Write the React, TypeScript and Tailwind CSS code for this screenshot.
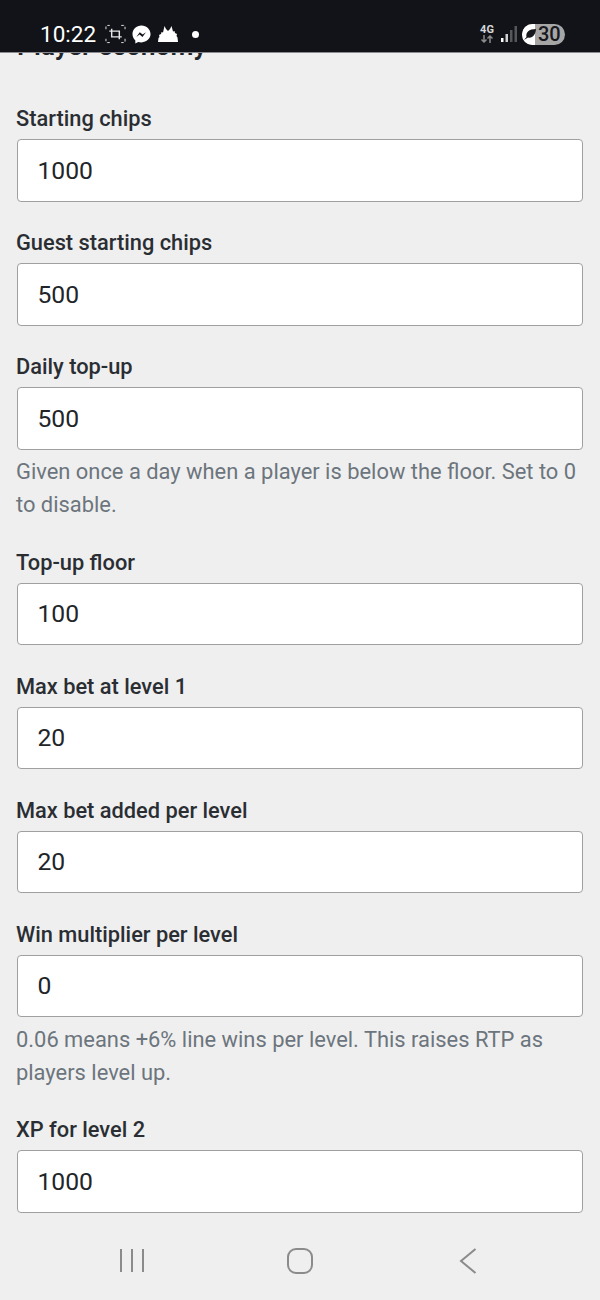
import { ReactNode } from 'react';

const Field = ({ label, value, hint }: { label: string; value: string; hint?: ReactNode }) => (
  <div className="mb-[23.500px]">
    <label className="block h-[38px] pt-[3px] text-[21.8px] leading-[30px] font-[550] text-[#2a2e33]">{label}</label>
    <div className="ml-px mr-px h-[62.500px] flex items-center pl-[19.500px] bg-white border border-[#a0a0a0] rounded-[4px] text-[24.7px] text-[#212529]">
      {value}
    </div>
    {hint && <p className="mt-[5.700px] text-[21.9px] leading-[33px] text-[#6c757d]">{hint}</p>}
  </div>
);

const StatusBar = () => (
  <div className="relative z-10 h-[53px] shrink-0 bg-[#111318] border-b border-[#8a8b8e] flex items-center justify-between pl-[40px] pr-[35px] pt-[16px]">
    <div className="flex items-center text-white">
      <span className="text-[22.500px] font-[450] leading-none">10:22</span>
      <svg viewBox="0 0 22 20" className="ml-[9px] w-[21px] h-[20px]" fill="none" stroke="#e8e8e8">
        <path d="M1 5V2.500A1.500 1.500 0 0 1 2.500 1H5M17 1h2.500A1.500 1.500 0 0 1 21 2.500V5M21 15v2.500a1.500 1.500 0 0 1-1.500 1.500H17M5 19H2.500A1.500 1.500 0 0 1 1 17.500V15" strokeWidth="1" strokeDasharray="3 1.500" />
        <path d="M7 7h8v6H7zM7 4.500V7H4.500M15 15.500V13h2.500" strokeWidth="1.500" />
      </svg>
      <svg viewBox="0 0 20 20" className="ml-[6px] w-[19px] h-[19px]">
        <path d="M10 .5C4.600.5.500 4.400.5 9.600c0 2.700 1.100 5 3 6.600v3.300l3-1.700c1.100.3 2.300.5 3.500.5 5.400 0 9.500-3.900 9.500-8.700S15.400.5 10 .5z" fill="#fff" />
        <path d="M4.500 12.500l3.700-5 3 2.500 3.500-2.500-3.700 5-3-2.500z" fill="#111318" />
      </svg>
      <svg viewBox="0 0 20 16" className="ml-[7px] w-[20px] h-[16px]" fill="#fff">
        <path d="M0 16l.5-4 1-1-.5-2 2-1 .5-2 1.500.5L6.500 0 8 3l2 2 2-2 1.500-3 1.500 5.500L16.500 5l.5 2 2 1-.5 2 1 1.500.500 4.500z" />
      </svg>
      <span className="ml-[14px] w-[7px] h-[7px] rounded-full bg-white" />
    </div>
    <div className="flex items-center">
      <div className="flex flex-col items-center leading-none mt-[-1px]">
        <span className="text-[11px] font-bold text-[#d8d8d8] leading-[10px]">4G</span>
        <svg viewBox="0 0 14 8" className="w-[14px] h-[8px]" fill="none" stroke="#8a8a8a" strokeWidth="1.500">
          <path d="M4 0v7M1.500 4.500L4 7l2.500-2.500M10 8V1M7.500 3.500L10 1l2.500 2.500" />
        </svg>
      </div>
      <svg viewBox="0 0 16 18" className="ml-[7px] w-[16px] h-[18px]">
        <rect x="0" y="13" width="2.500" height="4" fill="#fff" />
        <rect x="4.500" y="9" width="2.500" height="8" fill="#d0d0d0" />
        <rect x="9" y="5" width="2.500" height="12" fill="#55575a" />
        <rect x="13.500" y="1" width="2.500" height="16" fill="#55575a" />
      </svg>
      <div className="relative ml-[5px] w-[43px] h-[21px] rounded-full flex bg-[#a6a6a6]">
        <div className="w-[13px] bg-white rounded-l-full" />
        <svg viewBox="0 0 14 14" className="absolute left-[1px] top-[3px] w-[14px] h-[14px]" fill="#17181c">
          <path d="M1 13l2.500-3C2.500 5.500 6 2 13 2c-.5 6-3.500 9.500-8 8.500z" />
        </svg>
        <span className="absolute left-[16px] top-0 text-[20px] leading-[21px] font-medium text-[#17181c]">30</span>
      </div>
    </div>
  </div>
);

const NavBar = () => (
  <div className="h-[87px] shrink-0 bg-[#efefef] relative z-10 flex items-start pl-[120px] pt-[35px]">
    <svg viewBox="0 0 24 24" className="w-[24px] h-[24px]" stroke="#8b8b8b" strokeWidth="2" fill="none">
      <path d="M1 1v23M12 1v23M23 1v23" />
    </svg>
    <svg viewBox="0 0 26 26" className="w-[26px] h-[26px] ml-[143px]" stroke="#8b8b8b" strokeWidth="2" fill="none">
      <rect x="1" y="1" width="24" height="24" rx="8" />
    </svg>
    <svg viewBox="0 0 18 26" className="w-[18px] h-[26px] ml-[146px]" stroke="#8b8b8b" strokeWidth="2" fill="none">
      <path d="M16.500 1L2 13l14.500 12" />
    </svg>
  </div>
);

export default function App() {
  return (
    <div className="w-[600px] h-[1300px] flex flex-col overflow-hidden bg-[#efefef] font-['Roboto',sans-serif]">
      <StatusBar />
      <div className="flex-1 overflow-hidden px-[16px]">
        <h2 className="mt-[-22px] mb-[39px] ml-px h-[31px] text-[26.4px] leading-[31px] font-semibold text-[#212529]">Player economy</h2>
        <Field label="Starting chips" value="1000" />
        <Field label="Guest starting chips" value="500" />
        <Field label="Daily top-up" value="500" hint="Given once a day when a player is below the floor. Set to 0 to disable." />
        <Field label="Top-up floor" value="100" />
        <Field label="Max bet at level 1" value="20" />
        <Field label="Max bet added per level" value="20" />
        <Field label="Win multiplier per level" value="0" hint="0.06 means +6% line wins per level. This raises RTP as players level up." />
        <Field label="XP for level 2" value="1000" />
      </div>
      <NavBar />
    </div>
  );
}
